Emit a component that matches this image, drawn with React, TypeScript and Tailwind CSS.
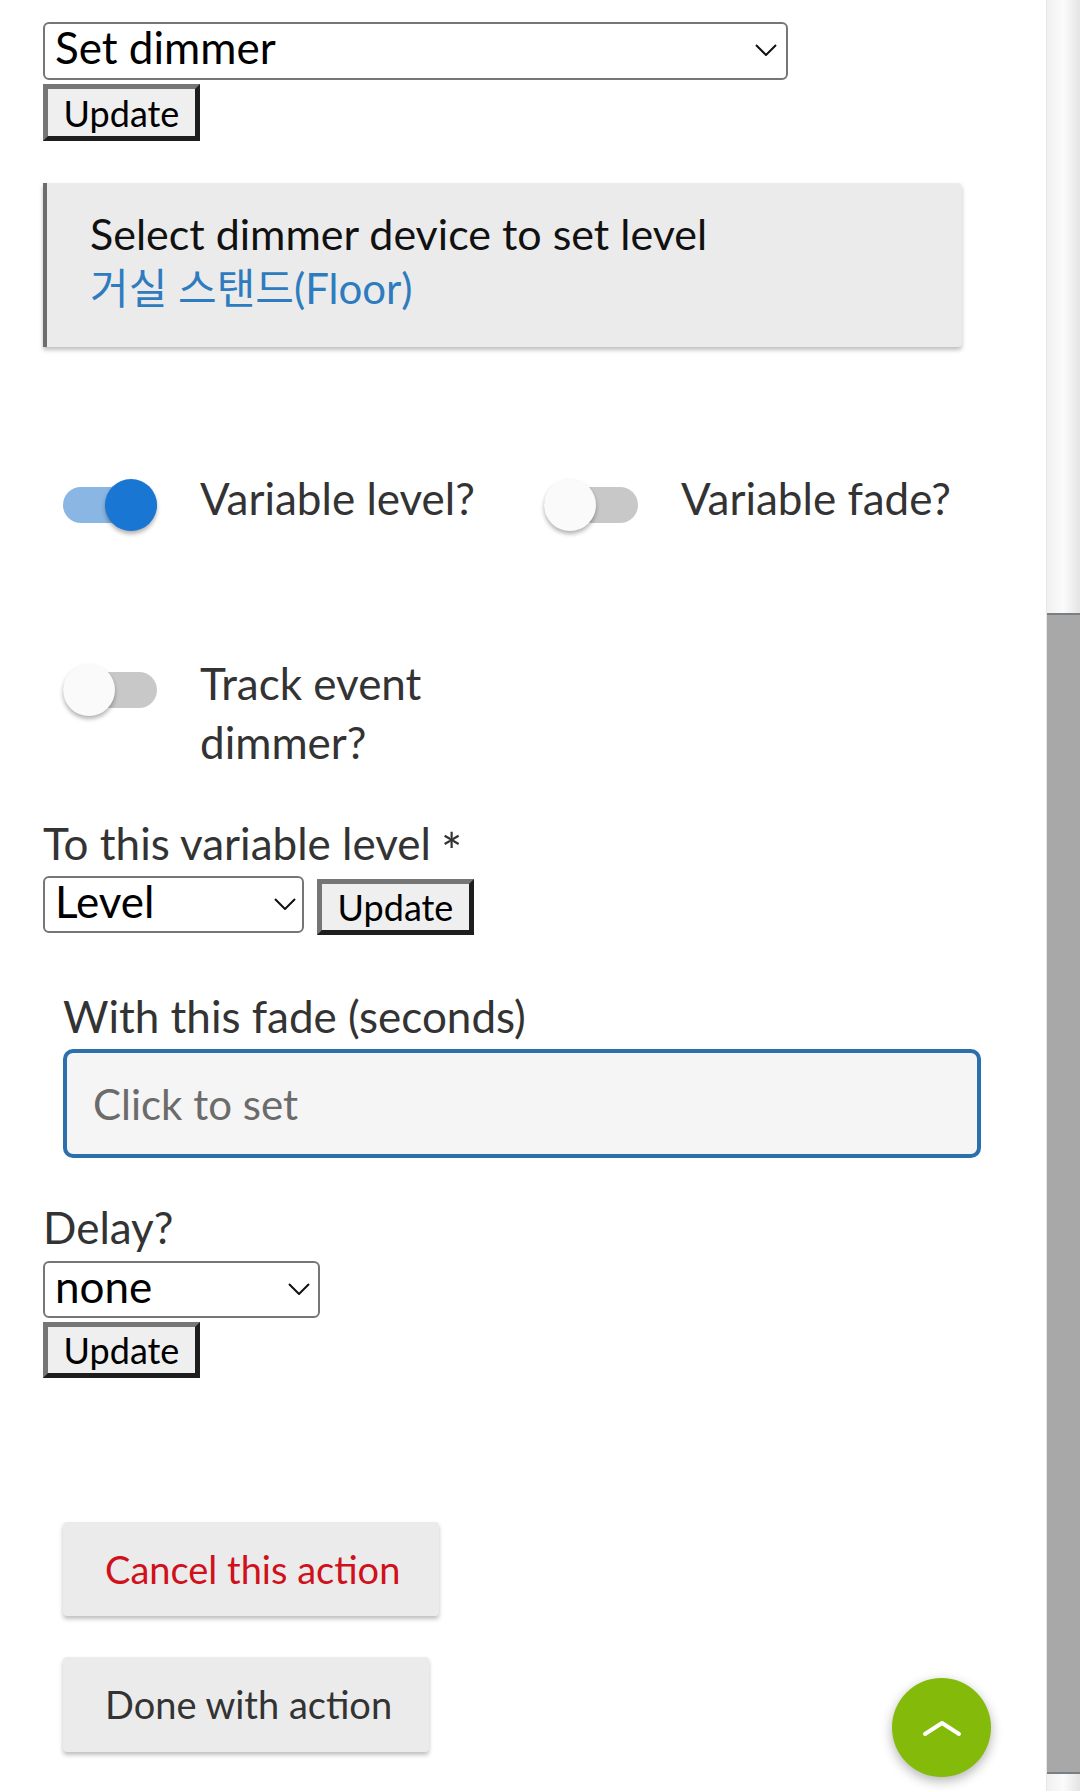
const font = "font-['Lato','Noto_Sans_CJK_KR',sans-serif]";

const Chevron = () => (
  <svg width="22" height="12" viewBox="0 0 22 12" fill="none">
    <polyline points="1,1 11,11 21,1" stroke="#111" strokeWidth="2" />
  </svg>
);

const Select = ({ value, w, arrowRight }: { value: string; w: string; arrowRight: string }) => (
  <div className={`relative ${w} h-[57px] shrink-0`}>
    <select
      className={`appearance-none w-full h-full border-2 border-[#767676] rounded-[6px] bg-white pl-[10px] pb-[8px] text-[44px] leading-none text-black ${font} outline-none`}
      defaultValue={value}
    >
      <option>{value}</option>
    </select>
    <div className={`absolute top-[22px] ${arrowRight} pointer-events-none`}>
      <Chevron />
    </div>
  </div>
);

const UpdateButton = ({ className = "" }: { className?: string }) => (
  <button
    className={`w-[157px] h-[57px] shrink-0 bg-[#efefef] border-[5px] border-t-[#767676] border-l-[#767676] border-b-[#1e1e1e] border-r-[#1e1e1e] text-[36px] text-black leading-none ${font} ${className}`}
  >
    Update
  </button>
);

const Switch = ({ on }: { on: boolean }) => (
  <div className="relative w-[94px] h-[52px] shrink-0">
    <div
      className={`absolute left-0 right-0 top-[8px] h-[36px] rounded-full ${
        on ? "bg-[#8ab6e3]" : "bg-[#c8c8c8]"
      }`}
    />
    <div
      className={`absolute top-0 w-[52px] h-[52px] rounded-full shadow-[0_3px_4px_rgba(0,0,0,0.3)] ${
        on ? "right-0 bg-[#1976d2]" : "left-0 bg-[#fafafa]"
      }`}
    />
  </div>
);

const ToggleItem = ({ on, label }: { on: boolean; label: string }) => (
  <div className="w-[481px] flex items-start">
    <div className="mt-[10px]">
      <Switch on={on} />
    </div>
    <div className="ml-[43px] mr-[44px] flex-1 text-[44px] leading-[59px] text-[#333]">{label}</div>
  </div>
);

export default function App() {
  return (
    <div className={`relative w-[1080px] h-[1791px] overflow-hidden bg-white flex ${font}`}>
      <div className="w-[1046px] pl-[43px] pt-[22px] flex flex-col items-start">
        <Select value="Set dimmer" w="w-[745px] !h-[58px]" arrowRight="right-[11px]" />
        <UpdateButton className="mt-[4px]" />

        <div className="mt-[42px] w-[919px] h-[164px] bg-[#ebebeb] border-l-4 border-[#6d6d6d] rounded-r-[4px] shadow-[0_3px_4px_rgba(0,0,0,0.25)] pl-[43px] pt-[23px]">
          <div className="text-[43px] leading-[55px] text-[#111]">Select dimmer device to set level</div>
          <div className="text-[42px] leading-[55px] text-[#2e7cbf]">거실 스탠드(Floor)</div>
        </div>

        <div className="mt-[122px] ml-[20px] flex">
          <ToggleItem on label="Variable level?" />
          <ToggleItem on={false} label="Variable fade?" />
        </div>
        <div className="mt-[123px] ml-[20px] flex">
          <ToggleItem on={false} label="Track event dimmer?" />
        </div>

        <div className="mt-[44px] text-[44px] leading-[50px] text-[#333]">
          To this variable level
          <span className="inline-block ml-[10px] text-[50px] leading-none translate-y-[10px]">*</span>
        </div>
        <div className="mt-[8px] flex items-start gap-[13px]">
          <Select value="Level" w="w-[261px]" arrowRight="right-[8px]" />
          <UpdateButton className="mt-[3px] !h-[56px]" />
        </div>

        <div className="mt-[56px] ml-[20px] text-[44px] leading-[50px] text-[#333]">With this fade (seconds)</div>
        <input
          placeholder="Click to set"
          className="mt-[8px] ml-[20px] w-[918px] h-[109px] border-4 border-[#2b6fad] rounded-[10px] bg-[#f5f5f5] px-[26px] text-[42px] text-[#333] placeholder:text-[#6b6b6b] outline-none"
        />

        <div className="mt-[44px] text-[44px] leading-[50px] text-[#333]">Delay?</div>
        <div className="mt-[9px]">
          <Select value="none" w="w-[277px]" arrowRight="right-[10px]" />
        </div>
        <UpdateButton className="mt-[4px] !h-[56px]" />

        <button className="mt-[144px] ml-[20px] w-[376px] h-[94px] rounded-[4px] bg-[#ebebeb] shadow-[0_3px_4px_rgba(0,0,0,0.25)] text-[38px] text-[#d0111b] text-left pl-[42px]">
          Cancel this action
        </button>
        <button className="mt-[41px] ml-[20px] w-[366px] h-[95px] rounded-[4px] bg-[#ebebeb] shadow-[0_3px_4px_rgba(0,0,0,0.25)] text-[38px] text-[#333] text-left pl-[42px]">
          Done with action
        </button>
      </div>

      <div className="w-[34px] flex flex-col border-l border-[#e6e6e6]">
        <div className="h-[613px] bg-gradient-to-r from-[#f0f0f0] via-[#fbfbfb] to-[#e4e4e4]" />
        <div className="h-[1161px] bg-[#a8a8a8] border-t-2 border-b-2 border-[#7a7f86]" />
        <div className="flex-1 bg-gradient-to-r from-[#f0f0f0] via-[#fbfbfb] to-[#e4e4e4]" />
      </div>

      <div className="absolute left-[892px] top-[1678px] w-[99px] h-[99px] rounded-full bg-[#84bb0a] shadow-[0_4px_12px_rgba(0,0,0,0.3)] flex items-center justify-center">
        <svg width="40" height="18" viewBox="0 0 40 18" fill="none">
          <polyline points="3,15 20,4 37,15" stroke="white" strokeWidth="4" strokeLinecap="round" strokeLinejoin="round" />
        </svg>
      </div>
    </div>
  );
}
